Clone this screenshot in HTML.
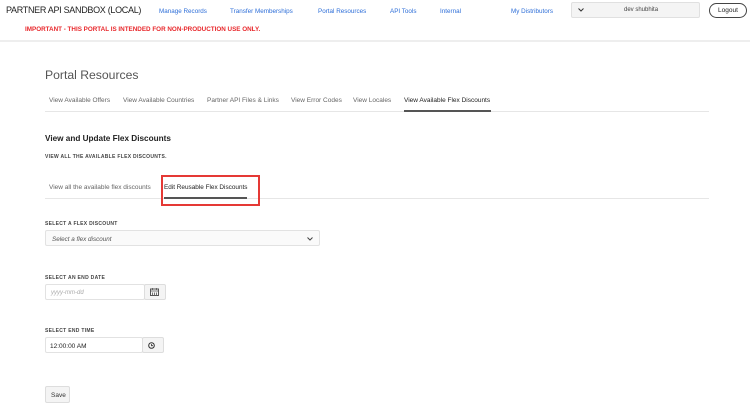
<!DOCTYPE html>
<html><head><meta charset="utf-8"><style>
*{margin:0;padding:0;box-sizing:border-box}
body{width:750px;height:407px;background:#fff;font-family:"Liberation Sans",sans-serif;position:relative;overflow:hidden;color:#333}
.a{position:absolute;white-space:nowrap}
.nav{font-size:6.3px;color:#2d6ed8;top:8px}
.tab{font-size:6.5px;color:#666;top:97px}
.lbl{font-size:5px;letter-spacing:.3px;color:#444;font-weight:bold}
.box{position:absolute;border:1px solid #e2e2e2;background:#fff;border-radius:2px}
.btn{position:absolute;border:1px solid #ddd;background:#f4f4f4;border-radius:2px}
</style></head><body>
<div class="a" style="left:6px;top:5px;font-size:9px;letter-spacing:-0.3px;color:#222">PARTNER API SANDBOX (LOCAL)</div>
<div class="a nav" style="left:159px">Manage Records</div>
<div class="a nav" style="left:230px">Transfer Memberships</div>
<div class="a nav" style="left:318px">Portal Resources</div>
<div class="a nav" style="left:390px">API Tools</div>
<div class="a nav" style="left:440px">Internal</div>
<div class="a nav" style="left:511px">My Distributors</div>
<div class="a" style="left:571px;top:2px;width:129px;height:16px;background:#f4f4f4;border:1px solid #e0e0e0;border-radius:2px"></div>
<svg class="a" style="left:578px;top:8px" width="6" height="4"><path d="M0.5 0.5L3 3L5.5 0.5" stroke="#333" fill="none" stroke-width="1"/></svg>
<div class="a" style="left:624px;top:7px;font-size:6px;color:#444">dev shubhita</div>
<div class="a" style="left:709px;top:3px;width:38px;height:15px;border:1px solid #444;border-radius:8px;font-size:6.5px;text-align:center;line-height:13px;color:#222">Logout</div>
<div class="a" style="left:25px;top:26px;font-size:6.3px;color:#e8272b;font-weight:bold">IMPORTANT - THIS PORTAL IS INTENDED FOR NON-PRODUCTION USE ONLY.</div>
<div class="a" style="left:0;top:40px;width:750px;height:2px;background:#eee"></div>

<div class="a" style="left:45px;top:68px;font-size:12.2px;color:#555">Portal Resources</div>
<div class="a tab" style="left:49px">View Available Offers</div>
<div class="a tab" style="left:123px">View Available Countries</div>
<div class="a tab" style="left:207px">Partner API Files &amp; Links</div>
<div class="a tab" style="left:291px">View Error Codes</div>
<div class="a tab" style="left:353px">View Locales</div>
<div class="a tab" style="left:404px;color:#222">View Available Flex Discounts</div>
<div class="a" style="left:45px;top:111px;width:664px;height:1px;background:#e6e6e6"></div>
<div class="a" style="left:404px;top:110px;width:87px;height:2px;background:#555"></div>

<div class="a" style="left:45px;top:134px;font-size:8.2px;font-weight:bold;color:#222">View and Update Flex Discounts</div>
<div class="a lbl" style="left:45px;top:154px">VIEW ALL THE AVAILABLE FLEX DISCOUNTS.</div>

<div class="a" style="left:49px;top:184px;font-size:6.5px;color:#666">View all the available flex discounts</div>
<div class="a" style="left:164px;top:184px;font-size:6.4px;color:#222">Edit Reusable Flex Discounts</div>
<div class="a" style="left:45px;top:198px;width:664px;height:1px;background:#e6e6e6"></div>
<div class="a" style="left:164px;top:197px;width:83px;height:2px;background:#555"></div>
<div class="a" style="left:161px;top:175px;width:99px;height:31px;border:2px solid #e53935"></div>

<div class="a lbl" style="left:45px;top:221px">SELECT A FLEX DISCOUNT</div>
<div class="box" style="left:45px;top:230px;width:275px;height:16px;background:#fafafa"></div>
<div class="a" style="left:52px;top:236px;font-size:6.3px;font-style:italic;color:#555">Select a flex discount</div>
<svg class="a" style="left:307px;top:237px" width="6" height="4"><path d="M0.5 0.5L3 3L5.5 0.5" stroke="#444" fill="none" stroke-width="1"/></svg>

<div class="a lbl" style="left:45px;top:275px">SELECT AN END DATE</div>
<div class="box" style="left:45px;top:284px;width:100px;height:16px"></div>
<div class="btn" style="left:144px;top:284px;width:22px;height:16px"></div>
<div class="a" style="left:51px;top:290px;font-size:6px;font-style:italic;color:#aaa">yyyy-mm-dd</div>
<svg class="a" style="left:150px;top:288px" width="9" height="8"><rect x="0.5" y="1" width="8" height="6.5" fill="none" stroke="#555" stroke-width="1"/><path d="M0.5 3H8.5M2.5 4.5V7M4.5 4.5V7M6.5 4.5V7M2.5 0V2M6.5 0V2" stroke="#555" stroke-width=".8"/></svg>

<div class="a lbl" style="left:45px;top:328px">SELECT END TIME</div>
<div class="box" style="left:45px;top:337px;width:98px;height:16px"></div>
<div class="btn" style="left:142px;top:337px;width:22px;height:16px"></div>
<div class="a" style="left:50px;top:343px;font-size:6.5px;color:#222">12:00:00 AM</div>
<svg class="a" style="left:148px;top:342px" width="7" height="7"><circle cx="3.5" cy="3.5" r="2.8" fill="none" stroke="#333" stroke-width="1"/><path d="M3.5 2V3.7H5" stroke="#333" stroke-width=".8" fill="none"/></svg>

<div class="btn" style="left:45px;top:386px;width:25px;height:17px"></div>
<div class="a" style="left:51px;top:392px;font-size:6.5px;color:#333">Save</div>
</body></html>
